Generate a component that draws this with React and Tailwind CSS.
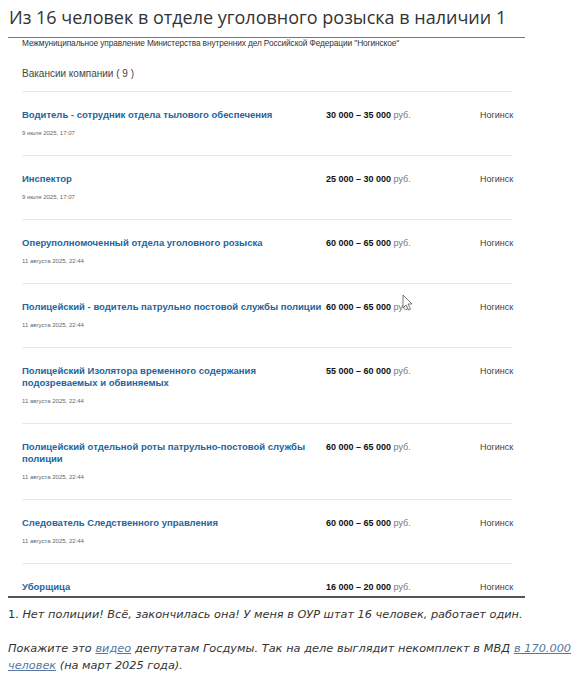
const vacancies = [
  { title: "Водитель - сотрудник отдела тылового обеспечения", salary: "30 000 – 35 000", date: "9 июля 2025, 17:07" },
  { title: "Инспектор", salary: "25 000 – 30 000", date: "9 июля 2025, 17:07" },
  { title: "Оперуполномоченный отдела уголовного розыска", salary: "60 000 – 65 000", date: "11 августа 2025, 22:44" },
  { title: "Полицейский - водитель патрульно постовой службы полиции", salary: "60 000 – 65 000", date: "11 августа 2025, 22:44" },
  { title: "Полицейский Изолятора временного содержания подозреваемых и обвиняемых", salary: "55 000 – 60 000", date: "11 августа 2025, 22:44" },
  { title: "Полицейский отдельной роты патрульно-постовой службы полиции", salary: "60 000 – 65 000", date: "11 августа 2025, 22:44" },
  { title: "Следователь Следственного управления", salary: "60 000 – 65 000", date: "11 августа 2025, 22:44" },
  // last row is cut by the screenshot edge, its date is not visible
  { title: "Уборщица", salary: "16 000 – 20 000" },
];

function VacancyRow({ item }) {
  return (
    <div className="border-t border-[#e9e9e9] pt-[17px] pb-[18px]">
      <div className="grid grid-cols-[304px_154px_1fr] items-start">
        <a className="text-[9.5px] leading-[12px] font-bold text-[#24659c] pr-[2px]">{item.title}</a>
        <div className="text-[9px] leading-[12px] text-[#111]">
          <span className="font-bold">{item.salary}</span>
          <span className="text-[#777]"> руб.</span>
        </div>
        <div className="text-[9px] leading-[12px] text-[#444] text-right">Ногинск</div>
      </div>
      {item.date && <div className="mt-[8px] text-[6px] leading-[8px] text-[#666]">{item.date}</div>}
    </div>
  );
}

function Cursor() {
  return (
    <svg className="absolute left-[394px] top-[256px]" width="11" height="17" viewBox="0 0 11 17">
      <path d="M1 1 L1 14 L4 11 L6.5 16 L8.5 15 L6 10 L10 10 Z" fill="#fff" stroke="#555" strokeWidth="0.8" strokeLinejoin="round" />
    </svg>
  );
}

export default function App() {
  return (
    <div className="bg-white w-[579px] h-[680px] overflow-hidden" style={{ fontFamily: '"Liberation Sans", Arial, sans-serif' }}>
      <h1 className="pt-[3px] pl-[9px] text-[18px] leading-[28px] font-normal text-[#333] mb-[6px]" style={{ fontFamily: '"Open Sans", "Noto Sans", sans-serif' }}>
        Из 16 человек в отделе уголовного розыска в наличии 1
      </h1>

      <div className="relative ml-[8px] w-[517px] h-[561px] border-t border-[#777] border-b-2 border-b-[#555] overflow-hidden">
        <div className="flex flex-col h-full overflow-hidden pl-[14px] pr-[13px]">
          <div className="text-[8.3px] leading-[8px] text-[#333] tracking-[-0.1px] pt-[1px]">
            Межмуниципальное управление Министерства внутренних дел Российской Федерации "Ногинское"
          </div>
          <div className="mt-[20px] mb-[10px] text-[10px] leading-[14px] text-[#444]">Вакансии компании ( 9 )</div>
          {vacancies.map((item) => (
            <VacancyRow key={item.title} item={item} />
          ))}
        </div>
        <Cursor />
      </div>

      <div className="px-[8px] pt-[8px] text-[11.3px] leading-[17px] text-[#333]" style={{ fontFamily: 'Verdana, "DejaVu Sans", sans-serif' }}>
        <p>
          1. <em>Нет полиции! Всё, закончилась она! У меня в ОУР штат 16 человек, работает один.</em>
        </p>
        <p className="mt-[17px] italic text-justify">
          Покажите это <a className="underline text-[#5577a0]">видео</a> депутатам Госдумы. Так на деле выглядит некомплект в МВД{" "}
          <a className="underline text-[#5577a0]">в 170.000 человек</a> (на март 2025 года).
        </p>
      </div>
    </div>
  );
}
